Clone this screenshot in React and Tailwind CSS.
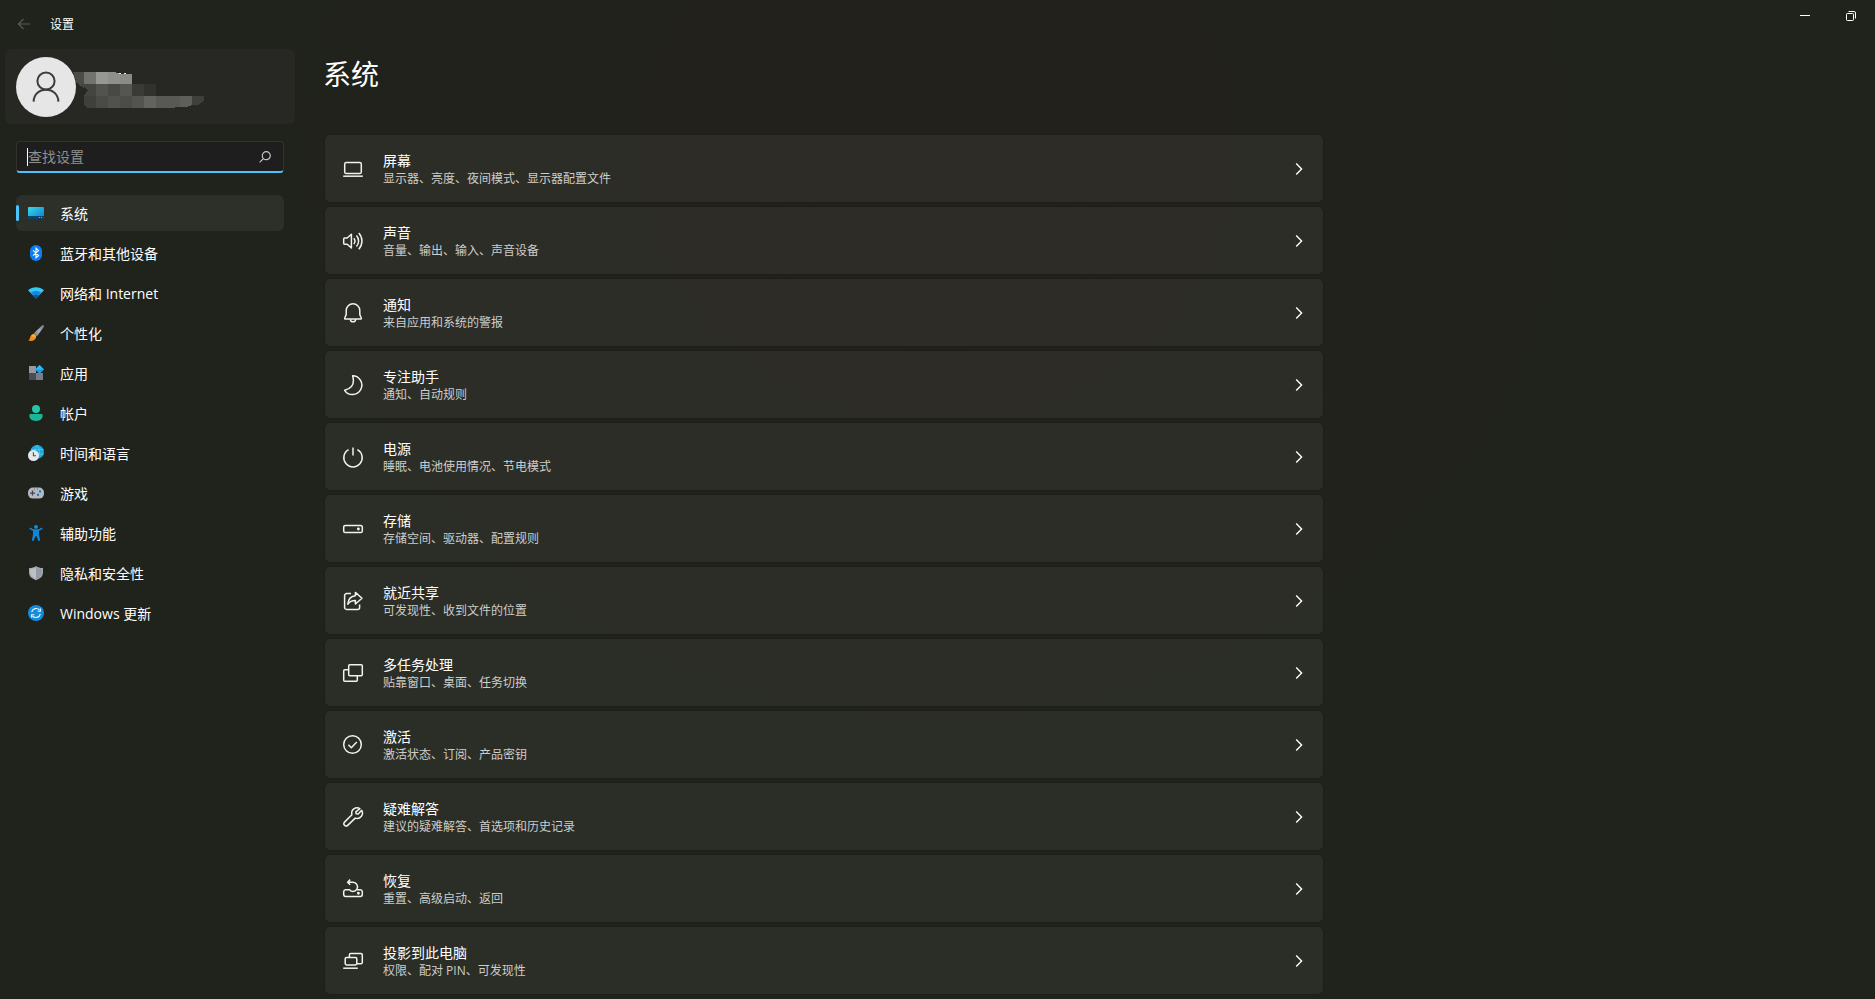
import { useState } from 'react'

const NAV_ITEMS = [
  { id: 'system', label: '系统', Icon: SystemIcon },
  { id: 'bluetooth', label: '蓝牙和其他设备', Icon: BluetoothIcon },
  { id: 'network', label: '网络和 Internet', Icon: WifiIcon },
  { id: 'personalization', label: '个性化', Icon: BrushIcon },
  { id: 'apps', label: '应用', Icon: AppsIcon },
  { id: 'accounts', label: '帐户', Icon: AccountIcon },
  { id: 'time', label: '时间和语言', Icon: TimeIcon },
  { id: 'gaming', label: '游戏', Icon: GamingIcon },
  { id: 'accessibility', label: '辅助功能', Icon: AccessibilityIcon },
  { id: 'privacy', label: '隐私和安全性', Icon: ShieldIcon },
  { id: 'update', label: 'Windows 更新', Icon: UpdateIcon },
]

const SETTINGS = [
  { title: '屏幕', desc: '显示器、亮度、夜间模式、显示器配置文件', icon: 'display' },
  { title: '声音', desc: '音量、输出、输入、声音设备', icon: 'sound' },
  { title: '通知', desc: '来自应用和系统的警报', icon: 'bell' },
  { title: '专注助手', desc: '通知、自动规则', icon: 'moon' },
  { title: '电源', desc: '睡眠、电池使用情况、节电模式', icon: 'power' },
  { title: '存储', desc: '存储空间、驱动器、配置规则', icon: 'storage' },
  { title: '就近共享', desc: '可发现性、收到文件的位置', icon: 'share' },
  { title: '多任务处理', desc: '贴靠窗口、桌面、任务切换', icon: 'multitask' },
  { title: '激活', desc: '激活状态、订阅、产品密钥', icon: 'check' },
  { title: '疑难解答', desc: '建议的疑难解答、首选项和历史记录', icon: 'wrench' },
  { title: '恢复', desc: '重置、高级启动、返回', icon: 'recovery' },
  { title: '投影到此电脑', desc: '权限、配对 PIN、可发现性', icon: 'project' },
]

const LINE_ICONS = {
  display: (
    <>
      <rect x="1.7" y="3.6" width="16.6" height="11" rx="1.6" />
      <path d="M0.2 17.2H19.8" />
    </>
  ),
  sound: (
    <>
      <path d="M8.4 3.2V17L4.2 13.2H1.6A1 1 0 0 1 0.7 12.2V8A1 1 0 0 1 1.6 7H4.2Z" />
      <path d="M10.8 7.2A4.6 4.6 0 0 1 10.8 13M13.4 4.6A8 8 0 0 1 13.4 15.6M15.8 2A12 12 0 0 1 15.8 18.2" />
    </>
  ),
  bell: (
    <>
      <path d="M10 0.8A6.8 6.8 0 0 0 3.2 7.6V11.6L1.7 15A0.7 0.7 0 0 0 2.4 16H17.6A0.7 0.7 0 0 0 18.3 15L16.8 11.6V7.6A6.8 6.8 0 0 0 10 0.8Z" />
      <path d="M7.4 16.2A2.6 2.6 0 0 0 12.6 16.2" />
    </>
  ),
  moon: <path d="M9.6 0.7A9.4 9.4 0 1 1 1.6 15.3C7 14 10.6 10.4 10.4 5.4C10.3 3.6 10 2 9.6 0.7Z" />,
  power: (
    <>
      <path d="M10 0.4V8.6" />
      <path d="M5.6 2.6A9.2 9.2 0 1 0 14.4 2.6" />
    </>
  ),
  storage: (
    <>
      <rect x="0.7" y="6.4" width="18.6" height="7.2" rx="1.6" />
      <circle cx="15.4" cy="10" r="0.7" />
    </>
  ),
  share: (
    <>
      <path d="M8 2.6H3.6A2 2 0 0 0 1.6 4.6V16.4A2 2 0 0 0 3.6 18.4H14.6A2 2 0 0 0 16.6 16.4V13.6" />
      <path d="M12.4 1.4L19 7.2L12.4 13V9.6C9 9.5 6.8 10.6 4.8 13.2C5.3 8.4 8 5.1 12.4 4.8Z" />
    </>
  ),
  multitask: (
    <>
      <rect x="5.7" y="1.7" width="13.6" height="11" rx="1" />
      <path d="M5.4 6.7H1.7A1 1 0 0 0 0.7 7.7V17.3A1 1 0 0 0 1.7 18.3H13.3A1 1 0 0 0 14.3 17.3V13" />
    </>
  ),
  check: (
    <>
      <circle cx="9.5" cy="9.5" r="8.8" />
      <path d="M5.4 9.8L8.3 12.7L13.8 6.9" />
    </>
  ),
  wrench: (
    <path d="M16.9 1.6A5.4 5.4 0 0 0 8.9 7.7L1.5 15.1A2.2 2.2 0 0 0 1.5 18.3A2.2 2.2 0 0 0 4.7 18.4L12.2 11.1A5.4 5.4 0 0 0 18.7 3.3L15.2 6.9L13.1 6.7L12.8 4.9Z" />
  ),
  recovery: (
    <>
      <path d="M6 10.8H2.6A2 2 0 0 0 0.7 12.6V15.6A1.8 1.8 0 0 0 2.5 17.4H17.5A1.8 1.8 0 0 0 19.3 15.6V12.6A2 2 0 0 0 17.4 10.8H14" />
      <path d="M7.2 0.6L4.6 3.2L7.2 5.8M4.8 3.2H10A4.6 4.6 0 1 1 6 10.2" />
      <circle cx="15.4" cy="14.2" r="0.7" />
    </>
  ),
  project: (
    <>
      <path d="M6.4 6.2V4A1.4 1.4 0 0 1 7.8 2.6H17.9A1.4 1.4 0 0 1 19.3 4V11.4A1.4 1.4 0 0 1 17.9 12.8H14" />
      <rect x="2.2" y="6.4" width="11.6" height="7.6" rx="1.4" />
      <path d="M0.2 17.2H14.8" />
    </>
  ),
}

function LineIcon({ name }) {
  return (
    <svg viewBox="0 0 20 20" className="w-5 h-5 shrink-0 overflow-visible" fill="none" stroke="#f2f2ee" strokeWidth="1.5" strokeLinejoin="round" aria-hidden="true">
      {LINE_ICONS[name]}
    </svg>
  )
}

function NavSvg({ children }) {
  return (
    <svg viewBox="0 0 16 16" className="w-4 h-4 shrink-0" aria-hidden="true">
      {children}
    </svg>
  )
}

function SystemIcon() {
  return (
    <NavSvg>
      <defs>
        <linearGradient id="sys" x1="0" y1="0" x2="1" y2="1">
          <stop offset="0" stopColor="#35dbe8" />
          <stop offset="1" stopColor="#1377cf" />
        </linearGradient>
      </defs>
      <rect y="2" width="16" height="12" rx="0.8" fill="url(#sys)" />
      <path d="M0 11H16V13.2A0.8 0.8 0 0 1 15.2 14H0.8A0.8 0.8 0 0 1 0 13.2Z" fill="#0b4468" />
      <path d="M11 12H12V13H11ZM13 12H14V13H13Z" fill="#58b8e8" />
    </NavSvg>
  )
}

function BluetoothIcon() {
  return (
    <NavSvg>
      <rect x="2" width="12" height="16" rx="6" fill="#0a7ff5" />
      <path d="M5 5.3L10.6 10.4L8 12.8V3.2L10.6 5.6L5 10.7" fill="none" stroke="#fff" strokeWidth="1.1" />
    </NavSvg>
  )
}

function WifiIcon() {
  return (
    <NavSvg>
      <path d="M0 5.2C4.4 1.3 11.6 1.3 16 5.2L8 13.6Z" fill="#35c8f5" />
      <path d="M2.7 8C5.8 5.4 10.2 5.4 13.3 8L8 13.6Z" fill="#1689dc" />
      <path d="M5.2 10.6C7 9.3 9 9.3 10.8 10.6L8 13.6Z" fill="#0d549f" />
    </NavSvg>
  )
}

function BrushIcon() {
  return (
    <NavSvg>
      <defs>
        <linearGradient id="brush" x1="1" y1="0" x2="0" y2="1">
          <stop offset="0" stopColor="#6d747b" />
          <stop offset="0.5" stopColor="#a9b0b6" />
          <stop offset="1" stopColor="#70767c" />
        </linearGradient>
      </defs>
      <path d="M14.2 0.2C15.4 -0.3 16.4 0.8 15.8 2L9 11.2L5.4 8.8Z" fill="url(#brush)" />
      <path d="M5.2 9.2C6.7 9.2 8.3 10.6 8.1 12.2C7.8 15.2 3.6 16.7 0.2 15.5C2.1 14.6 1.6 13 2.5 11.2C3.1 10 4 9.2 5.2 9.2Z" fill="#f58a1f" />
      <path d="M5.2 9.2C6.7 9.2 8.3 10.6 8.1 12.2L3.4 11.2C3.8 10 4.4 9.2 5.2 9.2Z" fill="#fbb53c" />
    </NavSvg>
  )
}

function AppsIcon() {
  return (
    <NavSvg>
      <rect x="1" y="1" width="7" height="7" fill="#959ba4" />
      <rect x="1" y="8" width="7" height="7" fill="#494d53" />
      <rect x="8" y="8" width="7" height="7" fill="#777e86" />
      <path d="M11.6 0L16 4.5L11.6 9L7.2 4.5Z" fill="#1b9de8" />
      <path d="M11.6 0L16 4.5H7.2Z" fill="#35b6f0" />
    </NavSvg>
  )
}

function AccountIcon() {
  return (
    <NavSvg>
      <circle cx="8" cy="4" r="4" fill="#22c7a5" />
      <path d="M2.6 9H13.4A1.3 1.3 0 0 1 14.7 10.3C14.7 14 12 16 8 16S1.3 14 1.3 10.3A1.3 1.3 0 0 1 2.6 9Z" fill="#1bb697" />
    </NavSvg>
  )
}

function TimeIcon() {
  return (
    <NavSvg>
      <circle cx="9.1" cy="6.9" r="6.9" fill="#1fa7dc" />
      <path d="M9.1 0C6 4 6 10 9.1 13.8M9.1 0C12.4 4 12.4 10 9.1 13.8M3 4.6H15.6M3 9.2H15.6" fill="none" stroke="#55d6f2" strokeWidth="0.7" />
      <circle cx="5.5" cy="10.5" r="5.5" fill="#e7e8ea" />
      <path d="M5.4 7.3V10.8H8" fill="none" stroke="#4a4e52" strokeWidth="1.1" />
    </NavSvg>
  )
}

function GamingIcon() {
  return (
    <NavSvg>
      <rect y="2.6" width="16" height="11" rx="5" fill="#b3b9c1" />
      <path d="M4.5 5.6V10.6M2 8.1H7" stroke="#41464c" strokeWidth="1.2" />
      <rect x="11" y="5.4" width="2" height="2" fill="#1573c9" />
      <rect x="9" y="8.8" width="2" height="2" fill="#1573c9" />
      <path d="M6 3.6H7V4.6H6ZM9 3.6H10V4.6H9Z" fill="#666c73" />
    </NavSvg>
  )
}

function AccessibilityIcon() {
  return (
    <NavSvg>
      <circle cx="8" cy="1.9" r="1.9" fill="#1590e0" />
      <path d="M2 2.4C3.6 3.4 5.6 4.4 8 4.4S12.4 3.4 14 2.4L14.7 3.7C13.6 4.6 12.2 5.4 11 5.8V9.4L12.2 15.6L10.4 16L8.4 11H7.6L5.6 16L3.8 15.6L5 9.4V5.8C3.8 5.4 2.4 4.6 1.3 3.7Z" fill="#0f86da" />
    </NavSvg>
  )
}

function ShieldIcon() {
  return (
    <NavSvg>
      <path d="M8 1C9.8 2.4 12.2 3 15 3V7.6C15 11.4 12.4 13.8 8 15.2C3.6 13.8 1 11.4 1 7.6V3C3.8 3 6.2 2.4 8 1Z" fill="#a2a7af" />
      <path d="M8 2.2V14C4.4 12.7 2.2 10.8 2.2 7.6V4.1C4.4 4 6.4 3.4 8 2.2Z" fill="#bbc0c7" />
      <path d="M8 2.2C9.6 3.4 11.6 4 13.8 4.1V7.6C13.8 10.8 11.6 12.7 8 14Z" fill="#979ca4" />
    </NavSvg>
  )
}

function UpdateIcon() {
  return (
    <NavSvg>
      <circle cx="8" cy="8" r="8" fill="#128ddd" />
      <path d="M3.7 7.2A4.5 4.5 0 0 1 11.6 5.2M12.3 8.8A4.5 4.5 0 0 1 4.4 10.8" fill="none" stroke="#e8f5ff" strokeWidth="1.2" />
      <path d="M12.4 3.4V6.2H9.6M3.6 12.6V9.8H6.4" fill="none" stroke="#e8f5ff" strokeWidth="1.1" />
    </NavSvg>
  )
}

// The account name and mail address are hidden behind grey blocks
function HiddenName() {
  return (
    <svg viewBox="0 -6 132 42" className="w-[132px] h-[42px] -ml-1 shrink-0" shapeRendering="crispEdges" aria-hidden="true">
      <path d="M1 0H12V16L5 11Z" fill="#4b4c48" />
      <rect x="12" width="12" height="12" fill="#72736f" />
      <rect x="24" width="12" height="12" fill="#979892" />
      <path d="M36 0H42L48 2V12H36Z" fill="#8f908b" />
      <rect x="48" y="2" width="12" height="10" fill="#8a8b86" />
      <path d="M47 1H49V2H47ZM52 1H54V2H52Z" fill="#eeeeea" />
      <path d="M8 12H24V24H12L16 18Z" fill="#444541" />
      <rect x="24" y="12" width="12" height="12" fill="#52534e" />
      <rect x="36" y="12" width="12" height="12" fill="#484944" />
      <rect x="48" y="12" width="12" height="12" fill="#555651" />
      <rect x="60" y="12" width="12" height="12" fill="#3a3b36" />
      <rect x="72" y="12" width="12" height="12" fill="#31322d" />
      <path d="M12 24H24V36H15L12 32Z" fill="#3f403b" />
      <rect x="24" y="24" width="12" height="12" fill="#4a4b46" />
      <rect x="36" y="24" width="12" height="12" fill="#51524d" />
      <rect x="48" y="24" width="12" height="12" fill="#4c4d48" />
      <rect x="60" y="24" width="12" height="12" fill="#53544f" />
      <rect x="72" y="24" width="12" height="12" fill="#62635e" />
      <path d="M84 24H108V35H103V36H84Z" fill="#585954" />
      <path d="M108 24H120V33L114 35H108Z" fill="#5e5f5a" />
      <path d="M120 24H132V29L126 33H120Z" fill="#3f403b" />
    </svg>
  )
}

function TitleBar() {
  return (
    <header className="flex items-start justify-between h-12">
      <div className="flex items-center h-12 pl-4">
        <button aria-label="返回" className="w-4 h-4 flex items-center justify-center">
          <svg viewBox="0 0 16 16" className="w-4 h-4" fill="none" stroke="#5c5d59" strokeWidth="1.2" aria-hidden="true">
            <path d="M14 8H2.4M7.6 2.8L2.4 8L7.6 13.2" />
          </svg>
        </button>
        <span className="ml-[18px] pt-0.5 text-xs text-white">设置</span>
      </div>
      <div className="flex pr-px">
        <button aria-label="最小化" className="w-[46px] h-8 flex items-center justify-center">
          <svg viewBox="0 0 10 10" className="w-[10px] h-[10px]" aria-hidden="true">
            <path d="M0 4H10V5H0Z" fill="#fff" />
          </svg>
        </button>
        <button aria-label="还原" className="w-[46px] h-8 flex items-center justify-center">
          <svg viewBox="0 0 10 10" className="w-[10px] h-[10px]" fill="none" stroke="#fff" aria-hidden="true">
            <rect x="0.5" y="2.5" width="7" height="7" rx="0.8" />
            <path d="M2.5 0.5H8A1.5 1.5 0 0 1 9.5 2V7.5" />
          </svg>
        </button>
      </div>
    </header>
  )
}

export default function App() {
  const [active, setActive] = useState('system')
  const [query, setQuery] = useState('')

  return (
    <div className="min-h-screen bg-[#20211c] bg-radial-[at_50%_15%] from-[#23211c] via-[#21221c] via-40% to-[#20221c] font-['Open_Sans','Noto_Sans_CJK_SC',sans-serif] text-white">
      <TitleBar />

      <div className="flex">
        {/* Sidebar */}
        <aside className="w-[300px] shrink-0 px-4">
          <button aria-label="帐户" className="-mx-[11px] mt-px w-[290px] h-[75px] pl-[11px] flex items-center rounded-md bg-white/3">
            <span className="w-[60px] h-[60px] shrink-0 rounded-full bg-[#e6e6e6] flex items-center justify-center">
              <svg viewBox="0 0 30 32" className="w-[30px] h-8" fill="none" stroke="#3d3d3d" strokeWidth="2" aria-hidden="true">
                <circle cx="15" cy="10" r="8.6" />
                <path d="M2.6 30.6C2.8 23.4 8 18.8 15 18.8S27.2 23.4 27.4 30.6" />
              </svg>
            </span>
            <HiddenName />
          </button>

          <div className="mt-[17px] h-8 pl-[10px] pr-3 flex items-center rounded-sm border border-[#31312e] border-b-2 border-b-[#4cc2ff] bg-[#1f1e1e]">
            <span className="w-px h-[18px] bg-white"></span>
            <input
              type="text"
              aria-label="查找设置"
              placeholder="查找设置"
              value={query}
              onChange={e => setQuery(e.target.value)}
              className="min-w-0 flex-1 bg-transparent text-sm text-white placeholder:text-[#8f8f8c] outline-none"
            />
            <svg viewBox="0 0 12 12" className="w-3 h-3" fill="none" stroke="#c4c4c0" strokeWidth="1.2" aria-hidden="true">
              <circle cx="7.3" cy="4.7" r="4" />
              <path d="M4.4 7.6L0.6 11.4" />
            </svg>
          </div>

          <nav className="mt-[22px] flex flex-col gap-1">
            {NAV_ITEMS.map(({ id, label, Icon }) => (
              <button
                key={id}
                onClick={() => setActive(id)}
                className={`h-9 flex items-center rounded-md text-sm ${active === id ? 'bg-white/6' : 'hover:bg-white/5'}`}>
                <span className={`w-[3px] h-4 rounded-full ${active === id ? 'bg-[#4cc2ff]' : ''}`}></span>
                <span className="ml-[9px] mr-4"><Icon /></span>
                <span className="pt-0.5">{label}</span>
              </button>
            ))}
          </nav>
        </aside>

        {/* Content */}
        <main className="flex-1 min-w-0 pl-6 pr-6 pb-1">
          <h1 className="h-[86px] pt-0.5 -ml-px text-[28px] leading-[48px]">系统</h1>
          <div className="max-w-[1000px] flex flex-col gap-[3px]">
            {SETTINGS.map(item => (
              <button
                key={item.title}
                className="h-[69px] px-[18px] flex items-center gap-5 rounded-md border border-black/10 bg-white/5 bg-clip-padding hover:bg-white/8 text-left">
                <LineIcon name={item.icon} />
                <span className="flex-1 min-w-0">
                  <span className="block text-sm leading-5">{item.title}</span>
                  <span className="block text-xs leading-4 text-[#cdcdca]">{item.desc}</span>
                </span>
                <svg viewBox="0 0 12 12" className="w-3 h-3 shrink-0" fill="none" stroke="#fff" strokeWidth="1.4" aria-hidden="true">
                  <path d="M3.2 0.6L8.6 6L3.2 11.4" />
                </svg>
              </button>
            ))}
          </div>
        </main>
      </div>
    </div>
  )
}
